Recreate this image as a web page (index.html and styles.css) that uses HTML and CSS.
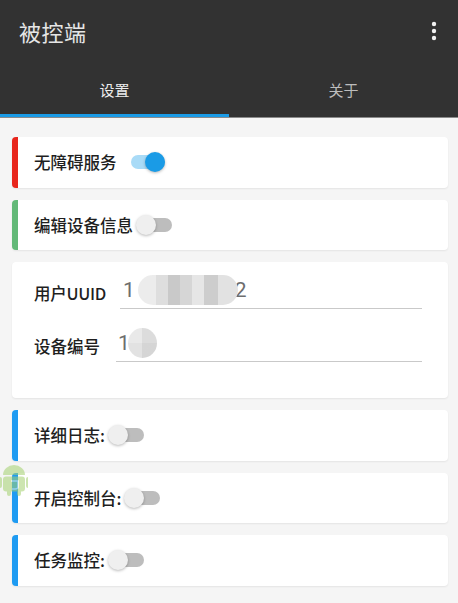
FILE: index.html
```html
<!DOCTYPE html>
<html lang="zh-CN">
<head>
<meta charset="utf-8">
<title>被控端</title>
<link rel="stylesheet" href="styles.css">
</head>
<body>
<header class="appbar">
  <div class="toolbar">
    <div class="title">被控端</div>
    <svg class="more" width="6" height="22" viewBox="0 0 6 22" aria-hidden="true">
      <circle cx="3" cy="3" r="2.2" fill="#f2f2f2"/>
      <circle cx="3" cy="10" r="2.2" fill="#f2f2f2"/>
      <circle cx="3" cy="17" r="2.2" fill="#f2f2f2"/>
    </svg>
  </div>
  <nav class="tabs">
    <div class="tab active"><span class="tab-label">设置</span><span class="indicator"></span></div>
    <div class="tab"><span class="tab-label">关于</span><span class="indicator"></span></div>
  </nav>
</header>

<main class="content">
  <section class="card stripe-red">
    <span class="label">无障碍服务</span>
    <span class="switch on wide"><span class="track"></span><span class="thumb"></span></span>
  </section>

  <section class="card stripe-green">
    <span class="label">编辑设备信息</span>
    <span class="switch"><span class="track"></span><span class="thumb"></span></span>
  </section>

  <section class="card form-card">
    <div class="field first">
      <span class="flabel">用户UUID</span>
      <div class="input uuid"><span class="digit">1</span><span class="blur blur-pill"></span><span class="digit">2</span></div>
    </div>
    <div class="field">
      <span class="flabel">设备编号</span>
      <div class="input serial"><span class="digit">1</span><span class="blur blur-dot"></span></div>
    </div>
  </section>

  <section class="card stripe-blue">
    <span class="label">详细日志:</span>
    <span class="switch"><span class="track"></span><span class="thumb"></span></span>
  </section>

  <section class="card stripe-blue">
    <span class="label">开启控制台:</span>
    <span class="switch"><span class="track"></span><span class="thumb"></span></span>
  </section>

  <section class="card stripe-blue">
    <span class="label">任务监控:</span>
    <span class="switch"><span class="track"></span><span class="thumb"></span></span>
  </section>
</main>

<svg class="float-bot" width="28" height="34" viewBox="0 0 28 34" aria-hidden="true">
  <g fill="#a5d170">
    <path d="M3 13 A11 10 0 0 1 25 13 Z"/>
    <rect x="3" y="14.5" width="22" height="15" rx="3"/>
    <rect x="-2" y="15" width="4" height="11" rx="2"/>
    <rect x="26" y="15" width="4" height="11" rx="2"/>
    <rect x="7" y="27" width="4" height="7" rx="2"/>
    <rect x="17" y="27" width="4" height="7" rx="2"/>
  </g>
  <path d="M11 19 H18 V25 Q18 27 15 27 H12" fill="none" stroke="#f4f9ee" stroke-width="1.6"/>
</svg>
</body>
</html>
```

FILE: styles.css
```css
* { box-sizing: border-box; }

html, body {
  margin: 0;
  padding: 0;
}

body {
  width: 458px;
  min-height: 603px;
  background: #f5f5f5;
  font-family: "Noto Sans CJK SC", "Noto Sans", Roboto, sans-serif;
  color: #222;
  position: relative;
  overflow: hidden;
}

/* ---------- app bar ---------- */
.appbar {
  background: #323232;
  border-bottom: 1px solid #8a8a8a;
}

.toolbar {
  height: 62px;
  display: flex;
  align-items: center;
  justify-content: space-between;
  padding: 0 21px 0 19px;
}

.title {
  font-size: 22px;
  line-height: 26px;
  color: #e6e6e6;
  letter-spacing: 0.5px;
}

.more {
  display: block;
  margin-top: 1px;
}

.tabs {
  display: flex;
}

.tab {
  flex: 1;
  display: flex;
  flex-direction: column;
  align-items: center;
}

.tab-label {
  height: 52px;
  padding-top: 18px;
  font-size: 15px;
  line-height: 20px;
  color: #bdbdbd;
}

.tab.active .tab-label {
  color: #ededed;
}

.indicator {
  align-self: stretch;
  height: 3px;
}

.tab.active .indicator {
  background: #1a9be6;
}

/* ---------- content ---------- */
.content {
  display: flex;
  flex-direction: column;
  gap: 12px;
  padding: 19px 10px 0 12px;
}

.card {
  background: #fff;
  border-radius: 4px;
  box-shadow: 0 1px 2px rgba(0, 0, 0, 0.07);
  height: 50.5px;
  display: flex;
  align-items: center;
  padding-left: 16px;
  border-left: 6px solid transparent;
}

.stripe-red { border-left-color: #e8261c; }
.stripe-green { border-left-color: #63b978; }
.stripe-blue { border-left-color: #1e9bf2; }

.label {
  font-size: 16.5px;
  line-height: 22px;
  font-weight: 500;
  color: #1f1f1f;
}

/* ---------- switch ---------- */
.switch {
  position: relative;
  width: 37px;
  height: 22px;
  margin-left: 3px;
  flex: none;
}

.switch.wide {
  margin-left: 12px;
}

.switch .track {
  position: absolute;
  left: 2px;
  top: 4px;
  width: 34px;
  height: 14px;
  border-radius: 7px;
  background: #bdbdbd;
}

.switch .thumb {
  position: absolute;
  left: 0;
  top: 1px;
  width: 20px;
  height: 20px;
  border-radius: 50%;
  background: #efefef;
  box-shadow: 0 1px 3px rgba(0, 0, 0, 0.28);
}

.switch.on .track {
  background: #a9dbf7;
}

.switch.on .thumb {
  left: 16px;
  background: #1a9be6;
}

/* ---------- form card ---------- */
.form-card {
  height: 136px;
  display: flex;
  flex-direction: column;
  align-items: stretch;
  padding: 8px 26px 0 22px;
  border-left: 0;
}

.field {
  display: flex;
  align-items: flex-end;
  height: 39px;
}

.field + .field {
  margin-top: 14px;
}

.flabel {
  font-size: 16.5px;
  line-height: 22px;
  font-weight: 500;
  color: #1f1f1f;
  padding-bottom: 5px;
  margin-right: 16px;
  flex: none;
}

.field.first .flabel {
  width: 86px;
  margin-right: 0;
  letter-spacing: -0.3px;
}

.input {
  flex: 1;
  height: 39px;
  border-bottom: 1.5px solid #c9c9c9;
  display: flex;
  align-items: center;
  padding: 1px 0 0 3px;
  font-family: Roboto, "Noto Sans", sans-serif;
  font-size: 21px;
  color: #6e6e6e;
}

.serial {
  padding-left: 2px;
}

.digit {
  line-height: 24px;
}

.blur {
  display: inline-block;
  flex: none;
}

.blur-pill {
  width: 100px;
  height: 30px;
  margin: 0 -3px 0 3px;
  border-radius: 15px;
  background: linear-gradient(90deg,
    #ececec 0 18%, #dedede 18% 30%, #c9c9c9 30% 42%,
    #d6d6d6 42% 54%, #e6e6e6 54% 66%, #cdcdcd 66% 80%, #e2e2e2 80% 100%);
  filter: blur(0.5px);
}

.blur-dot {
  width: 29px;
  height: 30px;
  margin-left: -2px;
  border-radius: 50%;
  background:
    linear-gradient(180deg, transparent 0 50%, rgba(0,0,0,0.03) 50% 100%),
    linear-gradient(90deg, #e9e9e9 0 50%, #dcdcdc 50% 100%);
}

/* ---------- floating bot ---------- */
.float-bot {
  position: absolute;
  left: 0;
  top: 462px;
  opacity: 0.55;
}
```
